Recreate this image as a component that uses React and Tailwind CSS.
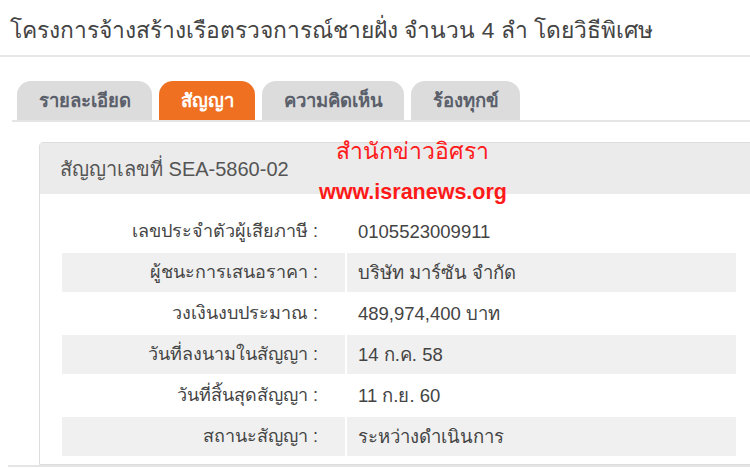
import React from "react";

const rows = [
  ["เลขประจำตัวผู้เสียภาษี :", "0105523009911"],
  ["ผู้ชนะการเสนอราคา :", "บริษัท มาร์ซัน จำกัด"],
  ["วงเงินงบประมาณ :", "489,974,400 บาท"],
  ["วันที่ลงนามในสัญญา :", "14 ก.ค. 58"],
  ["วันที่สิ้นสุดสัญญา :", "11 ก.ย. 60"],
  ["สถานะสัญญา :", "ระหว่างดำเนินการ"],
];

const tabs = [
  { label: "รายละเอียด", w: "w-[135px]" },
  { label: "สัญญา", w: "w-[96px]", active: true },
  { label: "ความคิดเห็น", w: "w-[142px]" },
  { label: "ร้องทุกข์", w: "w-[109px]" },
];

export default function App() {
  return (
    <div
      className="relative w-[750px] h-[468px] overflow-hidden bg-white text-[#444]"
      style={{ fontFamily: '"Liberation Sans", "Noto Sans", sans-serif' }}
    >
      {/* title */}
      <div className="pt-[15px] pb-[10px] px-[10px] border-b-2 border-[#e8e8e8]">
        <h1 className="text-[22.8px] leading-[30px] text-[#444]">
          โครงการจ้างสร้างเรือตรวจการณ์ชายฝั่ง จำนวน 4 ลำ โดยวิธีพิเศษ
        </h1>
      </div>

      {/* tabs */}
      <div className="mt-[24px] ml-[12px] pl-[5px] flex gap-[7px] border-b-2 border-[#e5e5e5]">
        {tabs.map((t) => (
          <div
            key={t.label}
            className={`${t.w} h-[39px] rounded-t-[14px] flex items-center justify-center text-[18.5px] font-bold ${
              t.active ? "bg-[#f07022] text-white" : "bg-[#dcdcdc] text-[#5a5f6a]"
            }`}
          >
            {t.label}
          </div>
        ))}
      </div>

      {/* panel */}
      <div className="mt-[20px] ml-[39px] w-[730px] border border-[#dddddd] rounded-tl-[4px] pb-[6px]">
        <div className="h-[51px] bg-[#ebebeb] flex items-center pl-[20px] text-[20px] text-[#555]">
          สัญญาเลขที่ SEA-5860-02
        </div>
        <table className="ml-[20px] mt-[16px] border-separate border-spacing-[2px]">
          <tbody>
            {rows.map(([k, v], i) => (
              <tr key={k} className={i % 2 === 1 ? "bg-[#f0f0f0]" : "bg-white"}>
                <td className="w-[283px] h-[39px] text-right pr-[27px] text-[18px] text-[#444]">{k}</td>
                <td className="w-[389px] h-[39px] pl-[11px] text-[18.5px] text-[#444]">{v}</td>
              </tr>
            ))}
          </tbody>
        </table>
      </div>
      <div className="ml-[8px] border-t-2 border-[#e5e5e5]" />

      {/* watermark */}
      <div className="absolute left-[336px] top-[136px] text-[23px] leading-[30px] text-[#ff1a1a]">
        สำนักข่าวอิศรา
      </div>
      <div
        className="absolute left-[319px] top-[178px] text-[21.5px] leading-[28px] font-bold text-[#ff1a1a]"
        style={{ fontFamily: '"Liberation Sans", sans-serif' }}
      >
        www.isranews.org
      </div>
    </div>
  );
}
